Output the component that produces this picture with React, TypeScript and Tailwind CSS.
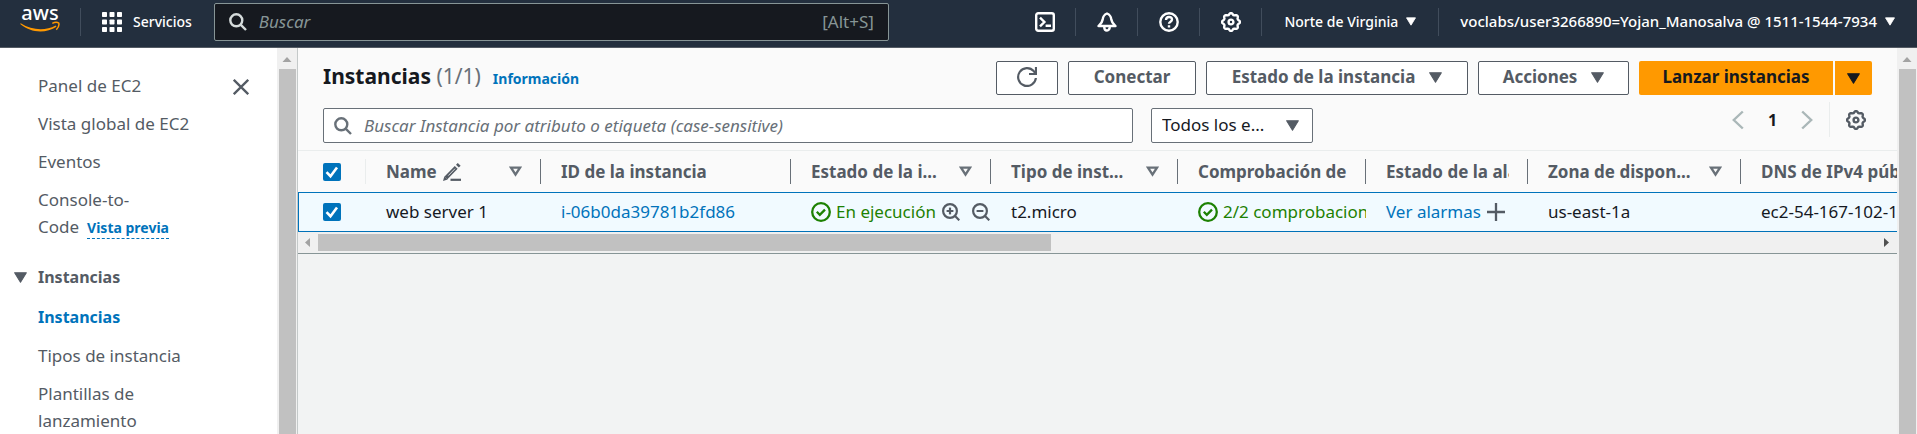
import React from "react";

type IconProps = { className?: string };

function gearPath(cx: number, cy: number, base: number, depth: number, teeth: number) {
  const steps = 96;
  const points = Array.from({ length: steps }, (_, i) => {
    const a = (i / steps) * Math.PI * 2;
    const wave = Math.max(-0.75, Math.min(0.75, Math.cos(teeth * a)));
    const r = base + depth * wave;
    return `${(cx + r * Math.cos(a)).toFixed(2)} ${(cy + r * Math.sin(a)).toFixed(2)}`;
  });
  return `M${points.join("L")}Z`;
}

const GEAR = gearPath(10, 10, 8.1, 1, 8);

function GearIcon({ className = "" }: IconProps) {
  return (
    <svg className={`size-5 ${className}`} viewBox="0 0 20 20" fill="none" stroke="currentColor" strokeWidth="2.4" strokeLinejoin="round" aria-hidden="true">
      <path d={GEAR} />
      <circle cx="10" cy="10" r="2.4" />
    </svg>
  );
}

function SearchIcon({ className = "" }: IconProps) {
  return (
    <svg className={`size-[18px] shrink-0 ${className}`} viewBox="0 0 18 18" fill="none" stroke="currentColor" strokeWidth="2.4" aria-hidden="true">
      <circle cx="7.3" cy="7.3" r="6" />
      <path d="M11.6 11.6 17 17" />
    </svg>
  );
}

function ZoomIcon({ plus }: { plus?: boolean }) {
  return (
    <svg className="size-[18px]" viewBox="0 0 18 18" fill="none" stroke="currentColor" strokeWidth="2.2" aria-hidden="true">
      <circle cx="8" cy="8" r="6.9" />
      <path d="M12.8 12.8 17.3 17.3M4.6 8h6.8" />
      {plus && <path d="M8 4.6v6.8" />}
    </svg>
  );
}

function CaretIcon({ className = "" }: IconProps) {
  return (
    <svg className={`shrink-0 ${className}`} viewBox="0 0 12 10" fill="currentColor" stroke="currentColor" strokeLinejoin="round" aria-hidden="true">
      <path d="M.6.6h10.8L6 9.4Z" />
    </svg>
  );
}

function SortIcon() {
  return (
    <svg className="h-[11px] w-[13px] shrink-0" viewBox="0 0 13 11" fill="none" stroke="currentColor" strokeWidth="2.4" aria-hidden="true">
      <path d="M2 1.6h9L6.5 8.6Z" />
    </svg>
  );
}

function StatusOkIcon() {
  return (
    <svg className="size-5 shrink-0" viewBox="0 0 20 20" fill="none" stroke="currentColor" strokeWidth="2.3" aria-hidden="true">
      <circle cx="10" cy="10" r="8.8" />
      <path d="m5.8 9.8 3 3 5.2-5.2" />
    </svg>
  );
}

function AwsLogo() {
  return (
    <svg className="h-12 w-10" viewBox="0 -8 40 48" aria-label="aws">
      <text x="20" y="14" fill="#fff" fontFamily="'Noto Sans', sans-serif" fontSize="20" fontWeight="500" textAnchor="middle">
        aws
      </text>
      <path d="M.7 17.3C12.300 24.600 25.500 25 35.600 19.500l.9 1.300C26 27.600 11 27.300.2 18.100Z" fill="#f90" />
      <path d="M32.300 17.400c2.600-1.300 5.600-.9 6.500-.3.4 1.800-.3 4.500-2.500 6.600" fill="none" stroke="#f90" strokeWidth="1.500" />
    </svg>
  );
}

function GridIcon() {
  return (
    <svg className="size-5" viewBox="0 0 20 20" fill="currentColor" aria-hidden="true">
      {[0, 7.5, 15].map((y) => [0, 7.5, 15].map((x) => <rect key={`${x}-${y}`} x={x} y={y} width="5" height="5" rx=".7" />))}
    </svg>
  );
}

function ShellIcon() {
  return (
    <svg className="size-5" viewBox="0 0 20 20" fill="none" stroke="currentColor" strokeWidth="2.400" aria-hidden="true">
      <rect x="1.200" y="1.200" width="17.600" height="17.600" rx="2" />
      <path d="M5 5.600 9.400 10 5 14.400M10.600 13.700H16" />
    </svg>
  );
}

function BellIcon() {
  return (
    <svg className="size-5" viewBox="0 0 20 20" fill="none" stroke="currentColor" strokeWidth="2.400" strokeLinejoin="round" aria-hidden="true">
      <path d="M10 1.500C7.400 2.500 6 4.400 5.700 7.500 5.300 10.500 4.200 11.400 1.500 14h17c-2.700-2.600-3.800-3.500-4.200-6.500C14 4.400 12.600 2.500 10 1.500Z" />
      <path d="M7.200 14.500c0 5.400 5.600 5.400 5.600 0" />
    </svg>
  );
}

function HelpIcon() {
  return (
    <svg className="size-5" viewBox="0 0 20 20" fill="none" stroke="currentColor" strokeWidth="2.400" aria-hidden="true">
      <circle cx="10" cy="10" r="8.700" />
      <path d="M7 8c0-4 6-3.900 6-.5 0 2.300-3 2-3 4.300M10 13.300v2.200" />
    </svg>
  );
}

function RefreshIcon() {
  return (
    <svg className="size-5" viewBox="0 0 20 20" fill="none" stroke="currentColor" strokeWidth="2.200" aria-hidden="true">
      <path d="M18.900 11A8.900 8.900 0 1 1 16.700 4.100L18.500 6.400" />
      <path d="M12 7h7V0" />
    </svg>
  );
}

function PencilIcon() {
  return (
    <svg className="size-[18px]" viewBox="0 0 18 18" aria-hidden="true">
      <path d="M3 14.800 13.200 4.400" stroke="currentColor" strokeWidth="4" />
      <path d="M0 18l1.400-4.800 3.300 3.400Z" fill="currentColor" />
      <path d="M14.400 3.200 16.200 1.400" stroke="currentColor" strokeWidth="4" />
      <path d="M5.300 12.600 12 5.700" stroke="#fafafa" strokeWidth=".8" />
      <path d="M7.500 16.800H18" stroke="currentColor" strokeWidth="2.200" />
    </svg>
  );
}

function Chevron({ left }: { left?: boolean }) {
  return (
    <svg className="h-5 w-3" viewBox="0 0 12 20" fill="none" stroke="#aab7b8" strokeWidth="2.400" aria-hidden="true">
      <path d={left ? "M10.800 1.500 1.800 10l9 8.500" : "m1.200 1.500 9 8.500-9 8.500"} />
    </svg>
  );
}

function Checkbox({ label }: { label: string }) {
  return (
    <label className="relative block size-[18px]">
      <input type="checkbox" defaultChecked aria-label={label} className="block size-[18px] appearance-none rounded-[2px] bg-[#0073bb]" />
      <svg className="pointer-events-none absolute inset-0 size-[18px]" viewBox="0 0 18 18" fill="none" stroke="#fff" strokeWidth="2.600" aria-hidden="true">
        <path d="m3.500 9.200 4 4L14 4.500" />
      </svg>
    </label>
  );
}

function VerticalScrollbar() {
  return (
    <div className="flex w-5 shrink-0 flex-col items-center bg-[#f0f0f0]">
      <svg className="h-[21px] w-full shrink-0" viewBox="0 0 20 21" fill="#a3a3a3" aria-hidden="true">
        <path d="M5.500 14h9L10 9Z" />
      </svg>
      <div className="w-[17px] flex-1 bg-[#c1c1c1]" />
    </div>
  );
}

function HeaderIconButton({ label, children }: { label: string; children: React.ReactNode }) {
  return (
    <div className="flex h-7 w-[62px] items-center justify-center border-r border-[#414d5c]">
      <button type="button" aria-label={label}>
        {children}
      </button>
    </div>
  );
}

function TopBar() {
  return (
    <header className="flex h-12 items-center border-b border-[#545b64] bg-[#232f3e] pb-1 text-white">
      <a href="#inicio" className="flex h-7 items-center border-r border-[#414d5c] pr-5 pl-5">
        <AwsLogo />
      </a>
      <button type="button" className="ml-[21px] flex items-center gap-[11px] text-[14px] font-medium">
        <GridIcon />
        Servicios
      </button>
      <div className="mr-4 ml-[22px] flex flex-1 items-center">
        <label className="flex h-[38px] w-[675px] items-center rounded-[2px] border border-[#879596] bg-[#16191f] px-3.5">
          <SearchIcon className="text-[#d5dbdb]" />
          <input type="search" aria-label="Buscar" placeholder="Buscar" className="ml-3 min-w-0 flex-1 bg-transparent text-[17px] outline-none placeholder:text-[#879596] placeholder:italic" />
          <span className="text-[17px] text-[#879596]">[Alt+S]</span>
        </label>
      </div>
      <div className="flex items-center">
        <HeaderIconButton label="CloudShell">
          <ShellIcon />
        </HeaderIconButton>
        <HeaderIconButton label="Notificaciones">
          <BellIcon />
        </HeaderIconButton>
        <HeaderIconButton label="Ayuda">
          <HelpIcon />
        </HeaderIconButton>
        <HeaderIconButton label="Configuración">
          <GearIcon />
        </HeaderIconButton>
        <button type="button" className="flex h-7 items-center gap-2 border-r border-[#414d5c] px-[22px] text-[14px] font-medium whitespace-nowrap">
          Norte de Virginia
          <CaretIcon className="h-[9px] w-[10px]" />
        </button>
        <button type="button" className="flex h-7 items-center gap-2 pr-[22px] pl-[21px] text-[15px] font-medium whitespace-nowrap">
          voclabs/user3266890=Yojan_Manosalva @ 1511-1544-7934
          <CaretIcon className="h-[9px] w-[10px]" />
        </button>
      </div>
    </header>
  );
}

function Sidebar() {
  return (
    <aside className="flex w-[297px] shrink-0">
      <nav className="flex flex-1 items-start overflow-hidden bg-white pt-6 text-[17px] leading-[27px] text-[#545b64]">
        <div className="flex-1">
          <ul className="flex flex-col gap-[11px] pl-[38px]">
            <li><a href="#panel">Panel de EC2</a></li>
            <li><a href="#vista-global">Vista global de EC2</a></li>
            <li><a href="#eventos">Eventos</a></li>
            <li>
              <a href="#console-to-code">Console-to-<br />Code</a>
              <button type="button" className="ml-2 border-b border-dashed border-[#0073bb] text-[14px] leading-5 font-bold text-[#0073bb]">
                Vista previa
              </button>
            </li>
          </ul>
          <button type="button" className="mt-6 flex items-center gap-[11px] pl-[14px] text-[16px] font-bold">
            <CaretIcon className="h-[11px] w-[13px]" />
            Instancias
          </button>
          <ul className="mt-3 flex flex-col gap-[11px] pl-[38px]">
            <li><a href="#instancias" className="text-[16px] font-bold text-[#0073bb]">Instancias</a></li>
            <li><a href="#tipos">Tipos de instancia</a></li>
            <li className="w-32"><a href="#plantillas">Plantillas de lanzamiento</a></li>
          </ul>
        </div>
        <button type="button" aria-label="Cerrar navegación" className="mt-[7px] mr-7 shrink-0">
          <svg className="size-4" viewBox="0 0 16 16" stroke="currentColor" strokeWidth="2.300" aria-hidden="true">
            <path d="m.8.8 14.400 14.400M15.200.8.8 15.200" />
          </svg>
        </button>
      </nav>
      <VerticalScrollbar />
    </aside>
  );
}

const outlineButton =
  "flex h-[34px] items-center justify-center rounded-[2px] border border-[#545b64] bg-white pb-0.5 text-[17px] font-bold whitespace-nowrap text-[#545b64]";

function Toolbar() {
  return (
    <div className="pt-[13px] pr-[25px] pb-[7px] pl-[25px]">
      <div className="flex items-center justify-between">
        <div className="flex items-baseline pb-1">
          <h1 className="text-[21px] leading-7 font-bold text-[#16191f]">
            Instancias <span className="font-normal text-[#687078]">(1/1)</span>
          </h1>
          <a href="#informacion" className="ml-3 text-[14px] font-bold text-[#0073bb]">Información</a>
        </div>
        <div className="flex gap-2.5">
          <button type="button" aria-label="Actualizar" className={`${outlineButton} w-[62px]`}>
            <RefreshIcon />
          </button>
          <button type="button" className={`${outlineButton} w-32`}>Conectar</button>
          <button type="button" className={`${outlineButton} w-[262px] gap-3.5`}>
            Estado de la instancia
            <CaretIcon className="h-[11px] w-[13px]" />
          </button>
          <button type="button" className={`${outlineButton} w-[151px] gap-3.5`}>
            Acciones
            <CaretIcon className="h-[11px] w-[13px]" />
          </button>
          <div className="flex gap-0.5 text-[17px] font-bold text-[#16191f]">
            <button type="button" className="h-[34px] w-[194px] rounded-l-[2px] bg-[#f90] pb-0.5">Lanzar instancias</button>
            <button type="button" aria-label="Más opciones de lanzamiento" className="flex h-[34px] w-[37px] items-center justify-center rounded-r-[2px] bg-[#f90]">
              <CaretIcon className="h-[11px] w-[13px]" />
            </button>
          </div>
        </div>
      </div>
      <div className="mt-[13px] flex items-start">
        <label className="flex h-[35px] w-[810px] items-center rounded-[2px] border border-[#687078] bg-white px-2.5 text-[#687078]">
          <SearchIcon />
          <input
            type="search"
            aria-label="Buscar instancia"
            placeholder="Buscar Instancia por atributo o etiqueta (case-sensitive)"
            className="ml-3 min-w-0 flex-1 bg-transparent text-[17px] outline-none placeholder:text-[#687078] placeholder:italic"
          />
        </label>
        <div className="relative ml-[18px]">
          <select aria-label="Estado" className="h-[35px] w-[162px] appearance-none rounded-[2px] border border-[#687078] bg-white px-2.5 pb-0.5 text-[17px] text-[#16191f]">
            <option>Todos los e...</option>
          </select>
          <CaretIcon className="pointer-events-none absolute top-3 right-3.5 h-[11px] w-[13px] text-[#545b64]" />
        </div>
        <div className="-mt-1.5 ml-auto flex h-[35px] items-center">
          <button type="button" aria-label="Página anterior"><Chevron left /></button>
          <button type="button" className="w-[57px] text-[16px] font-bold text-[#16191f]">1</button>
          <button type="button" aria-label="Página siguiente"><Chevron /></button>
          <div className="mr-4 ml-4 h-[35px] w-px bg-[#eaeded]" />
          <button type="button" aria-label="Preferencias" className="mr-1.5 text-[#545b64]"><GearIcon /></button>
        </div>
      </div>
    </div>
  );
}

type Column = { title: string; sort?: boolean; edit?: boolean };

const columns: Column[] = [
  { title: "Name", sort: true, edit: true },
  { title: "ID de la instancia" },
  { title: "Estado de la i...", sort: true },
  { title: "Tipo de inst...", sort: true },
  { title: "Comprobación de" },
  { title: "Estado de la alarma" },
  { title: "Zona de dispon...", sort: true },
  { title: "DNS de IPv4 público" },
];

function InstancesTable() {
  return (
    <div className="overflow-hidden">
      <table className="w-[1688px] table-fixed border-separate border-spacing-0 text-left text-[17px] whitespace-nowrap">
        <colgroup>
          <col className="w-[68px]" />
          <col className="w-[175px]" />
          <col className="w-[250px]" />
          <col className="w-[200px]" />
          <col className="w-[187px]" />
          <col className="w-[188px]" />
          <col className="w-[162px]" />
          <col className="w-[213px]" />
          <col className="w-[245px]" />
        </colgroup>
        <thead>
          <tr className="text-[#545b64]">
            <th scope="col" className="h-[42px] border-t border-[#eaeded] p-0">
              <div className="flex h-[25px] items-center border-r border-[#eaeded] pl-[25px]">
                <Checkbox label="Seleccionar todas las instancias" />
              </div>
            </th>
            {columns.map((column) => (
              <th key={column.title} scope="col" className="border-t border-[#eaeded] p-0 font-bold">
                <div className="flex h-[25px] items-center border-r border-[#687078] pr-[18px] pl-5">
                  <span className="min-w-0 flex-1 overflow-hidden">
                    <span className="flex items-center gap-1.5">
                      {column.title}
                      {column.edit && <PencilIcon />}
                    </span>
                  </span>
                  {column.sort && (
                    <button type="button" aria-label={`Ordenar por ${column.title}`} className="text-[#687078]">
                      <SortIcon />
                    </button>
                  )}
                </div>
              </th>
            ))}
          </tr>
        </thead>
        <tbody>
          <tr className="bg-[#f1faff] text-[#16191f] *:h-10 *:overflow-hidden *:border-y *:border-[#0073bb] *:p-0 *:pl-5">
            <td className="border-l">
              <div className="pl-1">
                <Checkbox label="Seleccionar web server 1" />
              </div>
            </td>
            <td>web server 1</td>
            <td><a href="#instancia" className="text-[#0073bb]">i-06b0da39781b2fd86</a></td>
            <td>
              <div className="flex items-center gap-1.5 text-[#545b64]">
                <span className="flex items-center gap-[5px] text-[#1d8102]">
                  <StatusOkIcon />
                  En ejecución
                </span>
                <button type="button" aria-label="Incluir en el filtro" className="mr-1.5"><ZoomIcon plus /></button>
                <button type="button" aria-label="Excluir del filtro"><ZoomIcon /></button>
              </div>
            </td>
            <td>t2.micro</td>
            <td>
              <div className="flex items-center gap-[5px] text-[#1d8102]">
                <StatusOkIcon />
                2/2 comprobaciones
              </div>
            </td>
            <td>
              <div className="flex items-center gap-1.5">
                <a href="#alarmas" className="text-[#0073bb]">Ver alarmas</a>
                <button type="button" aria-label="Crear alarma" className="text-[#545b64]">
                  <svg className="size-[18px]" viewBox="0 0 18 18" stroke="currentColor" strokeWidth="2.300" aria-hidden="true">
                    <path d="M9 0v18M0 9h18" />
                  </svg>
                </button>
              </div>
            </td>
            <td>us-east-1a</td>
            <td>ec2-54-167-102-118</td>
          </tr>
        </tbody>
      </table>
      <div className="flex h-[22px] items-center border-b border-[#879596] bg-[#f0f0f0] shadow-sm">
        <svg className="h-[9px] w-5 shrink-0" viewBox="0 0 20 9" fill="#a3a3a3" aria-hidden="true">
          <path d="M12 0v9L7 4.500Z" />
        </svg>
        <div className="flex-1">
          <div className="h-[17px] w-[47%] bg-[#c1c1c1]" />
        </div>
        <svg className="h-[9px] w-5 shrink-0" viewBox="0 0 20 9" fill="#505050" aria-hidden="true">
          <path d="M7 0v9L12 4.500Z" />
        </svg>
      </div>
    </div>
  );
}

export default function App() {
  return (
    <div className="flex h-screen flex-col overflow-hidden font-['Noto_Sans',sans-serif]">
      <TopBar />
      <div className="flex min-h-0 flex-1">
        <Sidebar />
        <main className="min-w-0 flex-1 border-l border-[#c4c9c9] bg-[#f2f3f3]">
          <section className="bg-[#fafafa]">
            <Toolbar />
            <InstancesTable />
          </section>
        </main>
        <VerticalScrollbar />
      </div>
    </div>
  );
}
